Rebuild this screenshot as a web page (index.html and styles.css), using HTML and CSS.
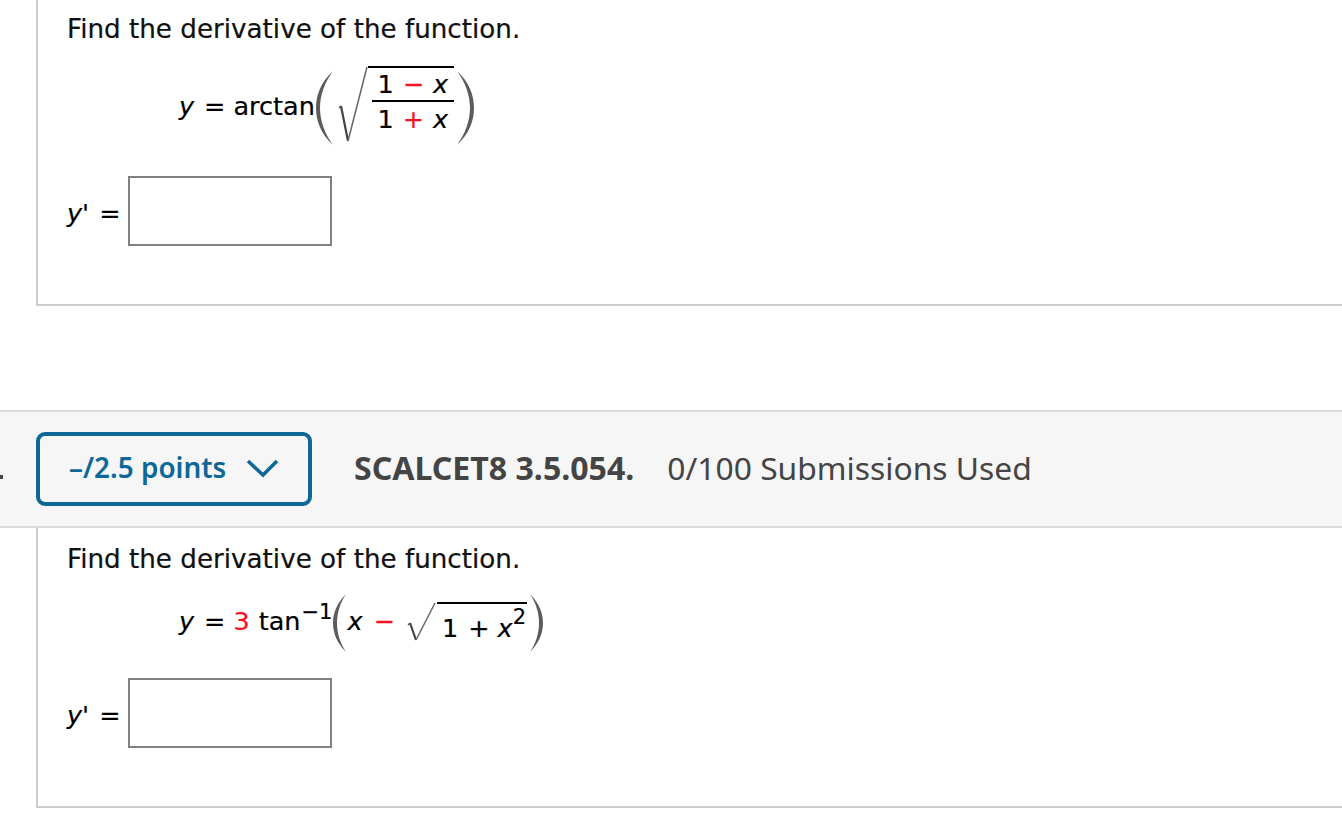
FILE: index.html
```html
<!DOCTYPE html>
<html lang="en">
<head>
<meta charset="utf-8">
<title>Derivative questions</title>
<link rel="stylesheet" href="styles.css">
</head>
<body>
<section class="panel panel-first">
  <p class="prompt">Find the derivative of the function.</p>
  <div class="equation eq-arctan">
    <i>y</i><span class="eq-sign">=</span><span>arctan</span>
    <svg class="paren-large" width="18" height="76" viewBox="0 0 18 76"><path d="M18 1C6 12 1 25 1 38s5 26 17 37C10 64 5 51 5 38S10 12 18 1Z" fill="#5c5c5c"/></svg>
    <svg class="radical" width="30" height="80" viewBox="0 0 30 80"><path d="M1 42l2-2" fill="none" stroke="#555" stroke-width="1.2"/><path d="M3 40l7 35" fill="none" stroke="#444" stroke-width="2.2"/><path d="M10 75L29 1" fill="none" stroke="#666" stroke-width="1.5"/></svg>
    <span class="radicand">
      <span class="fraction">
        <span class="numerator">1<span class="red">−</span><i>x</i></span>
        <span class="denominator">1<span class="red">+</span><i>x</i></span>
      </span>
    </span>
    <svg class="paren-large closing" width="18" height="76" viewBox="0 0 18 76"><path d="M0 1c12 11 17 24 17 37S12 64 0 75c8-11 13-24 13-37S8 12 0 1Z" fill="#5c5c5c"/></svg>
  </div>
  <div class="answer answer-first"><span class="answer-label"><i class="y-prime">y'</i> =</span><input class="answer-box" type="text" aria-label="answer"></div>
</section>

<header class="question-bar">
  <span class="clipped-mark"></span>
  <button class="points" type="button">–/2.5 points
    <svg width="33" height="20" viewBox="0 0 33 20"><path d="M2 3l15 14L31 3" fill="none" stroke="#0f6798" stroke-width="3.6"/></svg>
  </button>
  <strong class="code">SCALCET8 3.5.054.</strong>
  <span class="used">0/100 Submissions Used</span>
</header>

<section class="panel panel-second">
  <p class="prompt">Find the derivative of the function.</p>
  <div class="equation eq-tan">
    <i>y</i><span class="eq-sign">=</span><span class="red three">3</span><span>tan</span><span class="exp">−1</span>
    <svg class="paren-small" width="14" height="60" viewBox="0 0 14 60"><path d="M14 1C5 10 1 20 1 30s4 20 13 29C8 50 5 40 5 30S8 10 14 1Z" fill="#5c5c5c"/></svg>
    <i class="x-term">x</i><span class="red minus">−</span>
    <svg class="radical-small" width="30" height="44" viewBox="0 0 30 44"><path d="M1 24l2-2" fill="none" stroke="#555" stroke-width="1.2"/><path d="M3 22l6 17" fill="none" stroke="#444" stroke-width="2.2"/><path d="M9 39L28 2" fill="none" stroke="#666" stroke-width="1.5"/></svg>
    <span class="radicand-small">1<span class="plus">+</span><i class="x-squared">x</i><span class="square">2</span></span>
    <svg class="paren-small closing-small" width="14" height="60" viewBox="0 0 14 60"><path d="M0 1c9 9 13 19 13 29S9 50 0 59c6-9 9-19 9-29S6 10 0 1Z" fill="#5c5c5c"/></svg>
  </div>
  <div class="answer answer-second"><span class="answer-label"><i class="y-prime">y'</i> =</span><input class="answer-box" type="text" aria-label="answer"></div>
</section>
</body>
</html>
```
FILE: styles.css
```css
* { box-sizing: border-box; }
html, body { margin: 0; padding: 0; background: #fff; overflow: hidden; }
body { width: 1342px; height: 840px; font-family: "DejaVu Sans", Verdana, sans-serif; color: #000; font-size: 25.5px; }

.panel { margin-left: 36px; border-left: 2px solid #ccc; border-bottom: 2px solid #ccc; padding-left: 29px; }
.panel-first { height: 306px; padding-top: 13px; margin-bottom: 104px; }
.panel-second { height: 280px; padding-top: 15px; }

.prompt { margin: 0; font-size: 26.2px; line-height: 32px; color: #111; -webkit-text-stroke: 0.2px #111; }

.equation { display: flex; margin-left: 112px; -webkit-text-stroke: 0.2px currentColor; }
.eq-arctan { height: 80px; margin-top: 21px; align-items: center; }
.eq-tan { height: 60px; margin-top: 18px; align-items: flex-start; line-height: 56px; }
.eq-sign { margin: 0 8px 0 10px; }

.paren-large { flex: none; align-self: flex-end; }
.closing { margin-left: 3px; }
.radical { flex: none; margin-left: 5px; }

.radicand { align-self: flex-start; width: 86px; border-top: 2px solid #000; padding-left: 4px; }
.fraction { display: flex; flex-direction: column; width: 82px; }
.numerator, .denominator { display: flex; justify-content: center; align-items: center; gap: 9px; height: 34px; }
.numerator { border-bottom: 2px solid #000; }

.red { color: #f5121f; }
.three { margin-right: 9px; }
.exp { font-size: 21px; line-height: 21px; margin: 9px 0 0 1px; }
.x-term { margin-left: 1px; }
.minus { margin-left: 11px; }
.paren-small { flex: none; }
.closing-small { margin-left: 3px; }
.radical-small { flex: none; margin: 8px 0 0 12px; }
.radicand-small { display: flex; width: 90px; margin-top: 9px; padding-left: 5px; border-top: 2px solid #000; line-height: 48px; }
.plus { margin-left: 10px; }
.x-squared { margin-left: 8px; }
.square { font-size: 21px; line-height: 21px; margin-top: 3px; }

.answer { display: flex; align-items: center; }
.answer-first { margin-top: 30px; }
.answer-second { margin-top: 25px; }
.answer-label { width: 61px; padding-top: 3px; -webkit-text-stroke: 0.2px currentColor; }
.y-prime { margin-right: 2px; }
.answer-box { width: 204px; height: 70px; border: 2px solid #808080; background: #fff; padding: 0; margin: 0; border-radius: 0; outline: 0; }

.question-bar { position: relative; display: flex; align-items: center; height: 118px; padding-left: 36px; background: #f6f6f6; border-top: 2px solid #ddd; border-bottom: 2px solid #ddd; font-family: "Noto Sans", "Open Sans", sans-serif; font-size: 31.8px; color: #444; }
.clipped-mark { position: absolute; left: 0; top: 63px; width: 3px; height: 4px; background: #444; }
.points { display: flex; align-items: center; gap: 20px; width: 276px; height: 74px; padding: 0 0 4px 29px; background: transparent; border: 4px solid #0f6798; border-radius: 9px; color: #0f6798; font: 600 27.9px "Noto Sans", "Open Sans", sans-serif; }
.points svg { margin-top: 2px; }
.code { margin: 0 0 4px 42px; font-weight: 700; font-size: 32.1px; }
.used { margin: 0 0 4px 33px; }
```
